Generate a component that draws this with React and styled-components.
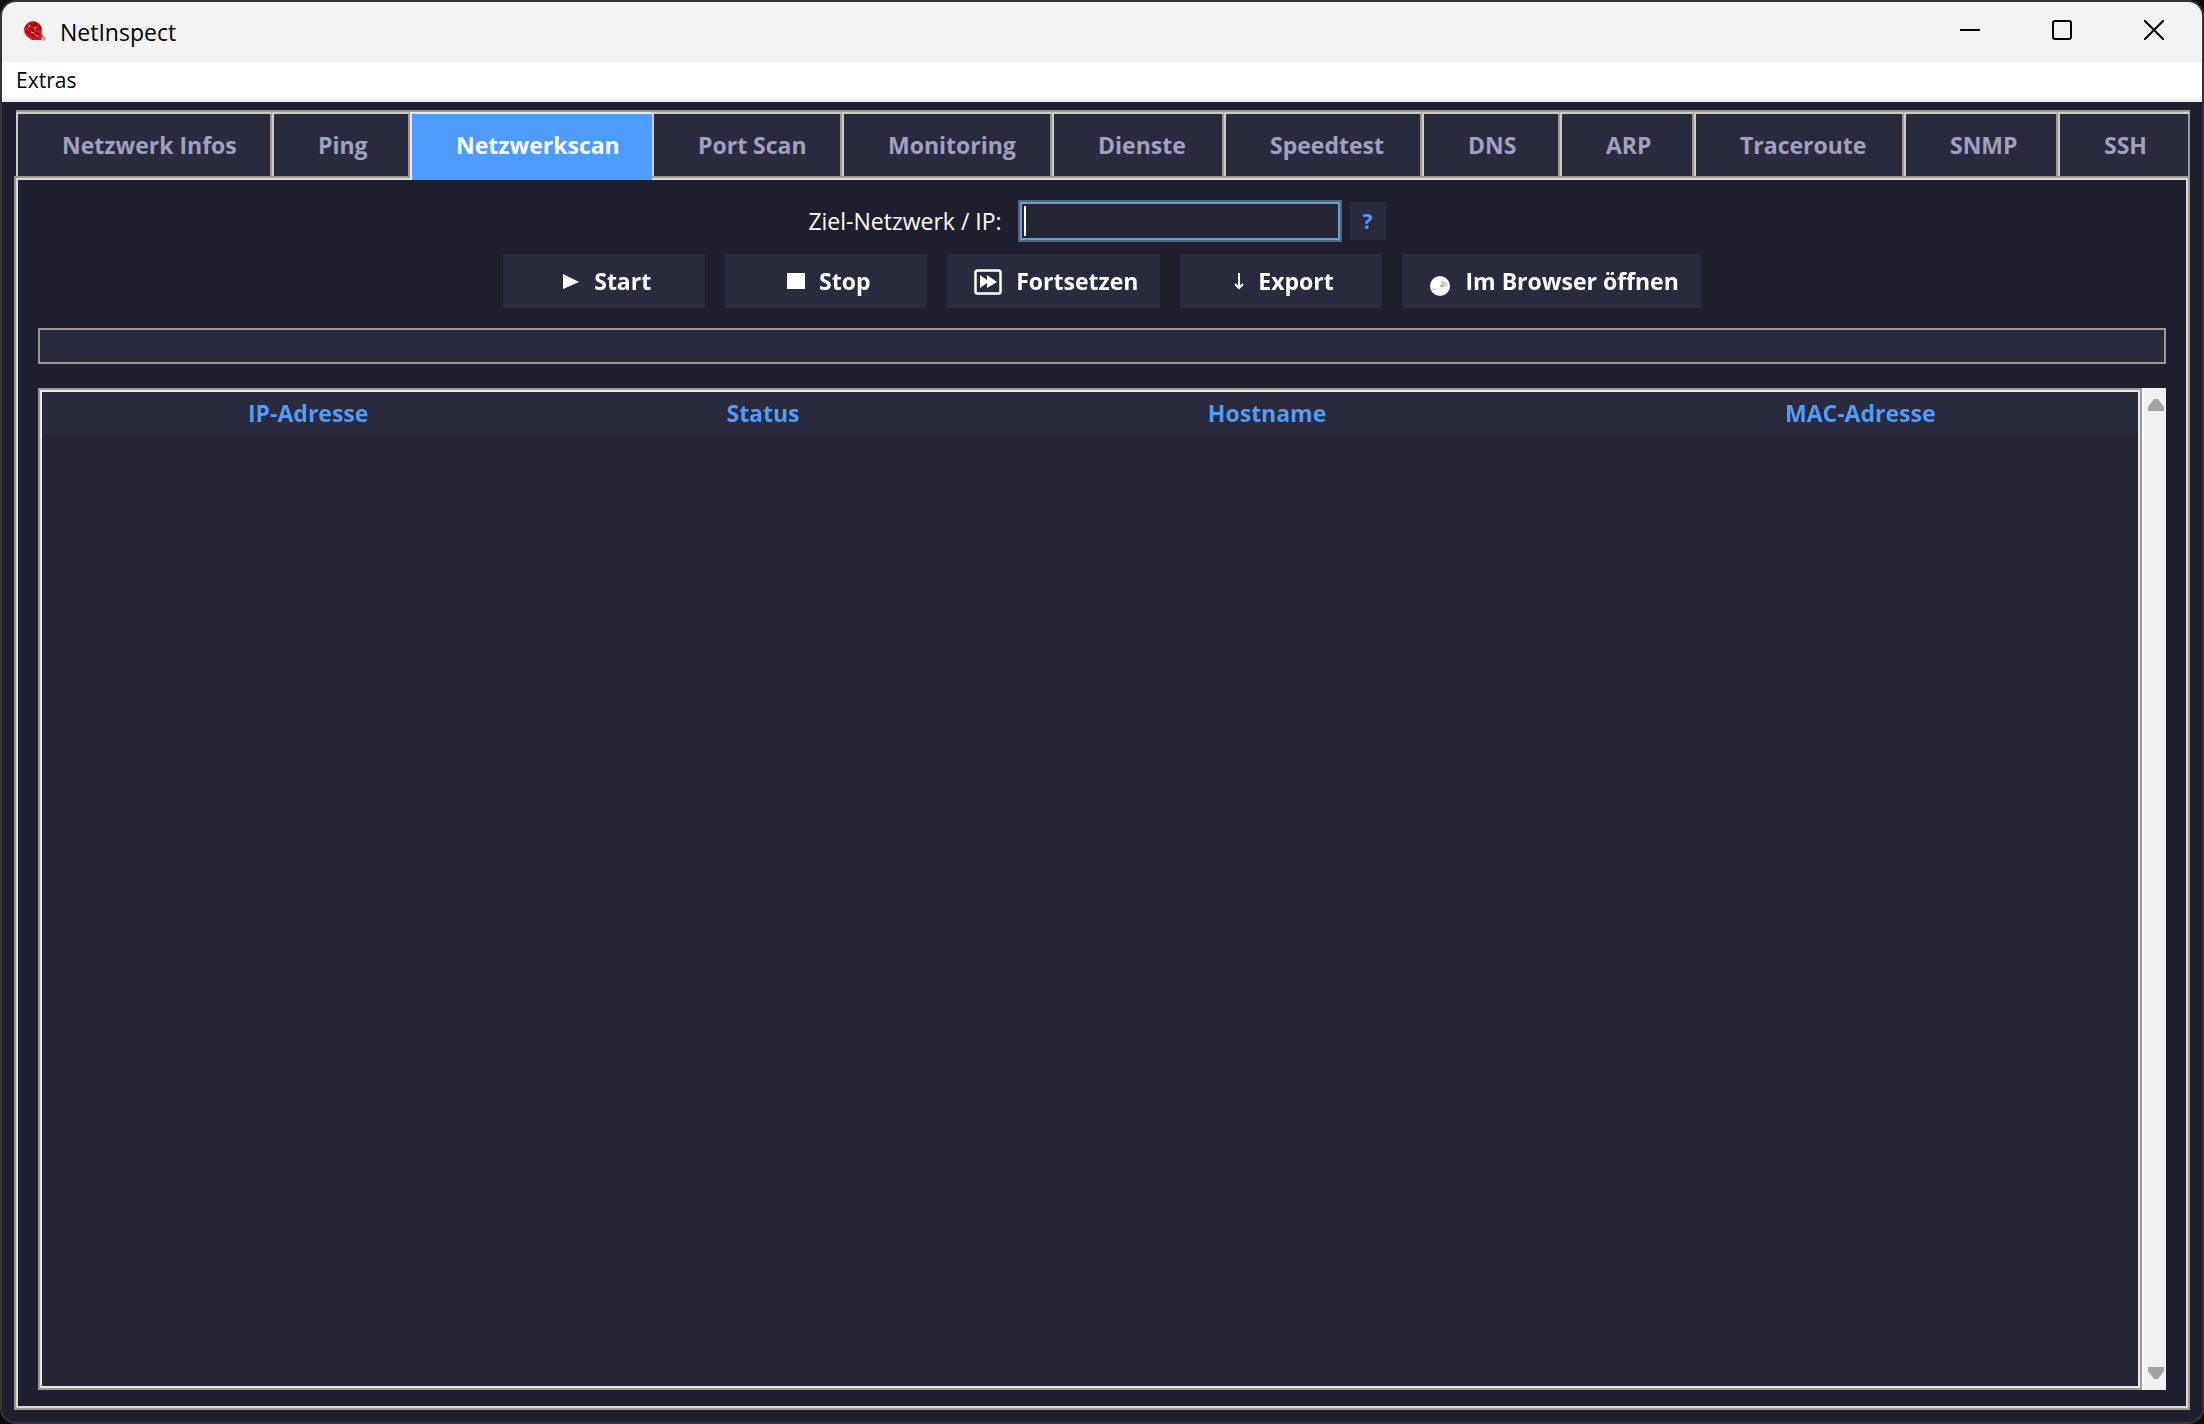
import React, { useState } from "react";
import styled, { createGlobalStyle } from "styled-components";

const GlobalStyle = createGlobalStyle`
  * {
    box-sizing: border-box;
  }

  body {
    margin: 0;
    background: #0d0d0d;
    font-family: "Open Sans", "Noto Sans", sans-serif;
    font-size: 23px;
    line-height: 32px;
  }

  button, input {
    font: inherit;
  }
`;

const Window = styled.div`
  min-height: 100vh;
  display: flex;
  flex-direction: column;
  overflow: hidden;
  background: #1f1e2e;
  border: 2px solid #343434;
  border-radius: 16px;
`;

const TitleBar = styled.header`
  height: 60px;
  display: flex;
  align-items: center;
  padding: 0 2px 0 20px;
  background: #f3f3f3;
  color: #000;
`;

const Title = styled.h1`
  flex: 1;
  margin: 0 0 0 12px;
  font-size: 23px;
  font-weight: 400;
`;

const WindowButton = styled.button`
  width: 92px;
  height: 60px;
  padding: 0 0 4px;
  display: flex;
  align-items: center;
  justify-content: center;
  border: none;
  background: transparent;
  color: #000;
`;

const MenuBar = styled.nav`
  height: 40px;
  padding: 0 8px;
  background: #fff;
  border-bottom: 4px solid #f0f0f0;
`;

const MenuItem = styled.button`
  height: 36px;
  padding: 0 6px;
  border: none;
  background: transparent;
  color: #000;
  font-size: 21px;
`;

const Notebook = styled.main`
  flex: 1;
  display: flex;
  flex-direction: column;
  padding: 8px 12px 12px;
`;

const TabList = styled.div`
  display: grid;
  grid-template-columns: ${(props) => props.$columns};
  padding-left: 2px;
`;

const Tab = styled.button`
  height: ${(props) => (props.$active ? "68px" : "64px")};
  margin: 2px 0 ${(props) => (props.$active ? "-4px" : "0")};
  padding: 0 0 ${(props) => (props.$active ? "4px" : "0")} 44px;
  z-index: ${(props) => (props.$active ? 1 : 0)};
  border: 2px solid;
  border-width: ${(props) => (props.$active ? "2px 0 0 2px" : "2px 2px 0 2px")};
  border-color: ${(props) =>
    props.$active ? "#eeebe7" : "#cfcdc8 #9e9a91 #cfcdc8 #cfcdc8"};
  box-shadow: 0 -2px 0 #9e9a91;
  background: ${(props) => (props.$active ? "#4f9cff" : "#2a2a3e")};
  color: ${(props) => (props.$active ? "#fff" : "#a0a0c0")};
  font-weight: 700;
  text-align: left;
  white-space: nowrap;
`;

const Page = styled.section`
  flex: 1;
  display: flex;
  flex-direction: column;
  padding: 22px 22px 18px;
  border: 2px solid #9e9a91;
  box-shadow: inset 0 0 0 2px #dedad6;
`;

const TargetRow = styled.form`
  display: flex;
  align-items: center;
  justify-content: center;
  margin-bottom: 12px;
  padding-right: 10px;
  color: #fff;
`;

/* the empty field shows a steady text cursor */
const TargetInput = styled.input`
  width: 324px;
  height: 42px;
  margin: 0 8px 0 16px;
  padding: 0 4px;
  border: 2px solid #4a6984;
  outline: none;
  box-shadow: inset 0 0 0 2px #6f9dc6;
  background-color: #262535;
  background-image: linear-gradient(#fff, #fff);
  background-repeat: no-repeat;
  background-position: 4px 4px;
  background-size: ${(props) => (props.value ? "0 0" : "2px 30px")};
  color: #fff;
  caret-color: ${(props) => (props.value ? "#fff" : "transparent")};
`;

const HelpButton = styled.button`
  width: 36px;
  height: 38px;
  padding: 0;
  border: none;
  background: #2a2a3e;
  color: #4f9cff;
  font-size: 21px;
  font-weight: 700;
`;

const ActionRow = styled.div`
  display: flex;
  justify-content: center;
  gap: 20px;
  margin-bottom: 20px;
`;

const ActionButton = styled.button`
  min-width: 202px;
  height: 54px;
  padding: 0 22px 0 27px;
  display: flex;
  align-items: center;
  justify-content: center;
  gap: 14px;
  border: none;
  background: #2a2a3e;
  color: #fff;
  font-weight: 700;
  white-space: nowrap;
`;

const Progress = styled.div`
  height: 36px;
  margin-bottom: 24px;
  border: 2px solid #9e9a91;
  background: #2a2a3e;
`;

const Results = styled.div`
  flex: 1;
  display: flex;
`;

const TableFrame = styled.div`
  flex: 1;
  padding: 2px;
  border: 2px solid #9e9a91;
  box-shadow: inset 0 0 0 2px #ebe8e3;
  background: #262535;
`;

const Table = styled.table`
  width: 100%;
  border-collapse: collapse;
  table-layout: fixed;
`;

const HeaderCell = styled.th`
  width: ${(props) => props.$width};
  height: 42px;
  padding: 0;
  background: #2a2a3e;
  color: #4f9cff;
  font-weight: 700;
`;

const ScrollBar = styled.div`
  width: 24px;
  display: flex;
  flex-direction: column;
  justify-content: space-between;
  border-left: 2px solid #fff;
  background: #f0f0f0;
`;

const ScrollButton = styled.button`
  height: 34px;
  padding: 0 0 0 2px;
  display: flex;
  align-items: center;
  justify-content: center;
  border: none;
  background: transparent;
`;

const tabs = [
  { label: "Netzwerk Infos", size: 256 },
  { label: "Ping", size: 138 },
  { label: "Netzwerkscan", size: 242 },
  { label: "Port Scan", size: 190 },
  { label: "Monitoring", size: 210 },
  { label: "Dienste", size: 172 },
  { label: "Speedtest", size: 198 },
  { label: "DNS", size: 138 },
  { label: "ARP", size: 134 },
  { label: "Traceroute", size: 210 },
  { label: "SNMP", size: 154 },
  { label: "SSH", size: 132 },
];

const columns = [
  { label: "IP-Adresse", width: "25.4%" },
  { label: "Status", width: "18%" },
  { label: "Hostname", width: "30.1%" },
  { label: "MAC-Adresse", width: "26.5%" },
];

function AppIcon() {
  return (
    <svg width="26" height="24" viewBox="0 0 26 24" fill="none">
      <ellipse cx="11" cy="10" rx="9" ry="9" fill="#e01820" />
      <path d="M6 17l12-5 4 5-3 3-9 0z" fill="#d8141c" />
      <path
        d="M4 6l4 3M8 3l3 3M12 2l3 4M4 11l4 3M9 8l3 4M14 7l3 3M9 14l4 3M14 12l3 4M17 5l2 4M7 12l2-2M11 6l2-2"
        stroke="#6d0509"
        strokeWidth="1.4"
      />
      <path d="M6 8l2-3M12 9l3-2M9 12l3 1M13 15l4 1" stroke="#ff9a9a" strokeWidth="1" />
      <path d="M20 17l3 3" stroke="#b9a3b5" strokeWidth="4" />
    </svg>
  );
}

function PlayIcon() {
  return (
    <svg width="18" height="18" viewBox="0 0 18 18">
      <path d="M1 2l16 8-16 7z" fill="#fff" />
    </svg>
  );
}

function StopIcon() {
  return (
    <svg width="18" height="18" viewBox="0 0 18 18">
      <path d="M0 1h18v16H0z" fill="#fff" />
    </svg>
  );
}

function ResumeIcon() {
  return (
    <svg width="28" height="28" viewBox="0 0 28 28">
      <rect x="1.5" y="3.5" width="25" height="23" rx="2" fill="none" stroke="#fff" strokeWidth="2.5" />
      <path d="M6 8l7 5V8l10 7-10 6v-5l-7 5z" fill="#fff" />
    </svg>
  );
}

function ExportIcon() {
  return (
    <svg width="10" height="18" viewBox="0 0 10 18">
      <path d="M5 1v15M1 12l4 4 4-4" fill="none" stroke="#fff" strokeWidth="2" />
    </svg>
  );
}

function BrowserIcon() {
  return (
    <svg width="22" height="30" viewBox="0 0 22 30">
      <circle cx="11" cy="20" r="10" fill="#fff" />
      <path d="M12 15v5h7a7 7 0 0 0-3-5z" fill="#d4cdd3" />
      <path d="M3 23h5" stroke="#e3dbe3" strokeWidth="2" />
      <path d="M11 20h4" stroke="#d8a8a8" strokeWidth="2" />
    </svg>
  );
}

function App() {
  const [active, setActive] = useState("Netzwerkscan");
  const [target, setTarget] = useState("");

  return (
    <Window>
      <GlobalStyle />
      <TitleBar>
        <AppIcon />
        <Title>NetInspect</Title>
        <WindowButton aria-label="Minimieren">
          <svg width="20" height="20" viewBox="0 0 20 20">
            <path d="M0 10h20" stroke="currentColor" strokeWidth="2" />
          </svg>
        </WindowButton>
        <WindowButton aria-label="Maximieren">
          <svg width="20" height="20" viewBox="0 0 20 20">
            <rect x="1" y="1" width="18" height="18" rx="2" fill="none" stroke="currentColor" strokeWidth="2" />
          </svg>
        </WindowButton>
        <WindowButton aria-label="Schließen">
          <svg width="20" height="20" viewBox="0 0 20 20">
            <path d="M0 0l20 20M20 0L0 20" stroke="currentColor" strokeWidth="2" />
          </svg>
        </WindowButton>
      </TitleBar>
      <MenuBar>
        <MenuItem>Extras</MenuItem>
      </MenuBar>
      <Notebook>
        <TabList role="tablist" $columns={tabs.map((tab) => `${tab.size}fr`).join(" ")}>
          {tabs.map((tab) => (
            <Tab
              key={tab.label}
              role="tab"
              aria-selected={tab.label === active}
              $active={tab.label === active}
              onClick={() => setActive(tab.label)}
            >
              {tab.label}
            </Tab>
          ))}
        </TabList>
        <Page>
          <TargetRow onSubmit={(e) => e.preventDefault()}>
            <label htmlFor="target">Ziel-Netzwerk / IP:</label>
            <TargetInput
              id="target"
              autoFocus
              value={target}
              onChange={(e) => setTarget(e.target.value)}
            />
            <HelpButton type="button">?</HelpButton>
          </TargetRow>
          <ActionRow>
            <ActionButton><PlayIcon />Start</ActionButton>
            <ActionButton><StopIcon />Stop</ActionButton>
            <ActionButton><ResumeIcon />Fortsetzen</ActionButton>
            <ActionButton><ExportIcon />Export</ActionButton>
            <ActionButton><BrowserIcon />Im Browser öffnen</ActionButton>
          </ActionRow>
          <Progress role="progressbar" aria-label="Fortschritt" aria-valuenow={0} />
          <Results>
            <TableFrame>
              <Table>
                <thead>
                  <tr>
                    {columns.map((column) => (
                      <HeaderCell key={column.label} $width={column.width}>
                        {column.label}
                      </HeaderCell>
                    ))}
                  </tr>
                </thead>
                <tbody />
              </Table>
            </TableFrame>
            <ScrollBar>
              <ScrollButton aria-label="Nach oben">
                <svg width="16" height="12" viewBox="0 0 16 12">
                  <path d="M0 12V8l6-8h4l6 8v4z" fill="#a3a3a3" />
                </svg>
              </ScrollButton>
              <ScrollButton aria-label="Nach unten">
                <svg width="16" height="12" viewBox="0 0 16 12">
                  <path d="M0 0v4l6 8h4l6-8V0z" fill="#a3a3a3" />
                </svg>
              </ScrollButton>
            </ScrollBar>
          </Results>
        </Page>
      </Notebook>
    </Window>
  );
}

export default App;
